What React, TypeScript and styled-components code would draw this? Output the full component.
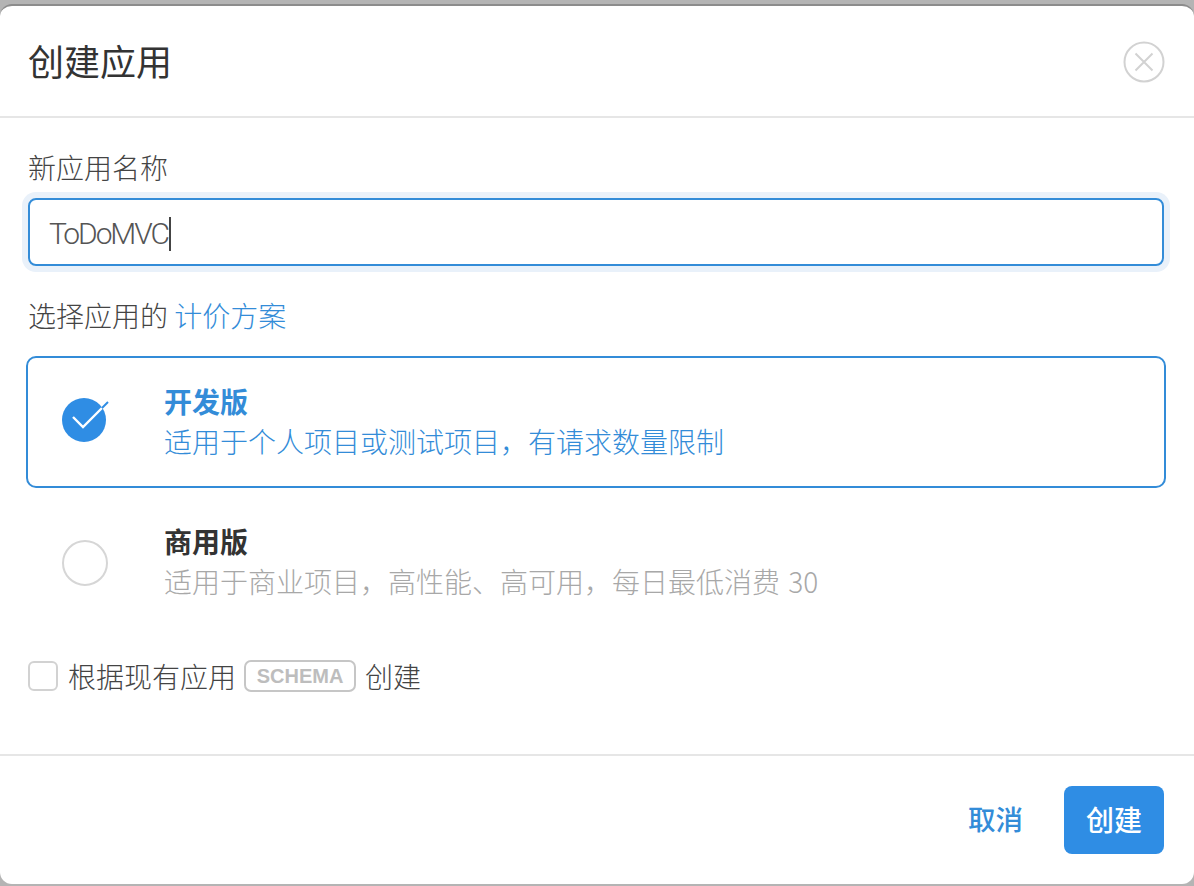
import React from "react";
import styled, { createGlobalStyle } from "styled-components";

const GlobalStyle = createGlobalStyle`
	html, body {
		margin: 0;
		padding: 0;
		background: #b4b4b4;
	}

	body {
		font-family: "Noto Sans CJK SC", "Liberation Sans", sans-serif;
		color: #333;
	}
`;

interface IPlan {
	name: string;
	desc: string;
	active?: boolean;
}

const plans: IPlan[] = [
	{
		name: "开发版",
		desc: "适用于个人项目或测试项目，有请求数量限制",
		active: true,
	},
	{
		name: "商用版",
		desc: "适用于商业项目，高性能、高可用，每日最低消费 30",
	},
];

const CheckedIcon = () => (
	<svg width="50" height="50" viewBox="0 0 50 50">
		<circle cx="22" cy="24" r="22" fill="#2f8de4" />
		<path d="M11 21 L21 31 L40 12" fill="none" stroke="#fff" strokeWidth="2.400" />
		<path d="M40 12 L46 6" fill="none" stroke="#2f8de4" strokeWidth="2" />
	</svg>
);

const CloseIcon = () => (
	<svg width="42" height="42" viewBox="0 0 42 42">
		<circle cx="21" cy="21" r="19.500" fill="none" stroke="#d2d2d2" strokeWidth="2" />
		<path
			d="M12.500 12.500 L29.500 29.500 M29.500 12.500 L12.500 29.500"
			fill="none"
			stroke="#d2d2d2"
			strokeWidth="2"
		/>
	</svg>
);

const App = () => {
	return (
		<>
			<GlobalStyle />
			<Page>
				<Modal>
					<Header>
						<Title>创建应用</Title>
						<CloseButton>
							<CloseIcon />
						</CloseButton>
					</Header>

					<Body>
						<Label>新应用名称</Label>
						<InputBox>
							ToDoMVC
							<Caret />
						</InputBox>

						<PlanLabel>
							选择应用的 <PlanLink>计价方案</PlanLink>
						</PlanLabel>

						{plans.map((plan) => (
							<PlanCard key={plan.name} $active={plan.active}>
								<PlanMark>{plan.active ? <CheckedIcon /> : <EmptyMark />}</PlanMark>
								<PlanText>
									<PlanName $active={plan.active}>{plan.name}</PlanName>
									<PlanDesc $active={plan.active}>{plan.desc}</PlanDesc>
								</PlanText>
							</PlanCard>
						))}

						<SchemaRow>
							<CheckBox />
							<span>根据现有应用</span>
							<Badge>SCHEMA</Badge>
							<span>创建</span>
						</SchemaRow>
					</Body>

					<Footer>
						<CancelButton>取消</CancelButton>
						<CreateButton>创建</CreateButton>
					</Footer>
				</Modal>
			</Page>
		</>
	);
};

const Page = styled.div`
	box-sizing: border-box;
	width: 1194px;
	height: 886px;
	padding: 4px 0 2px;
	overflow: hidden;
	background: #b4b4b4;
`;

const Modal = styled.div`
	display: flex;
	flex-direction: column;
	box-sizing: border-box;
	height: 880px;
	border-top: 2px solid #8c8c8c;
	border-radius: 12px;
	background: #fff;
`;

const Header = styled.div`
	display: flex;
	align-items: center;
	justify-content: space-between;
	box-sizing: border-box;
	height: 112px;
	padding: 0 29px 0 28px;
	border-bottom: 2px solid #e6e6e6;
`;

const Title = styled.h1`
	margin: 0 0 2px;
	font-size: 36px;
	font-weight: 400;
	line-height: 48px;
	color: #333;
`;

const CloseButton = styled.div`
	display: flex;
	width: 42px;
	height: 42px;
	margin-top: 2px;
`;

const Body = styled.div`
	flex: 1;
	display: flex;
	flex-direction: column;
	padding: 0 30px 0 28px;
`;

const Label = styled.div`
	margin-top: 29px;
	font-size: 28px;
	font-weight: 300;
	line-height: 40px;
	color: #444;
`;

const InputBox = styled.div`
	display: flex;
	align-items: center;
	box-sizing: border-box;
	height: 68px;
	margin-top: 11px;
	padding: 3px 19px 0;
	border: 2px solid #338cd8;
	border-radius: 8px;
	box-shadow: 0 0 0 6px #e9f1fa;
	font-family: "Roboto", "Liberation Sans", sans-serif;
	font-size: 30px;
	font-weight: 300;
	letter-spacing: -2.100px;
	color: #555;
`;

const Caret = styled.i`
	display: block;
	width: 2px;
	height: 34px;
	margin-left: 1px;
	background: #444;
`;

const PlanLabel = styled.div`
	margin-top: 29px;
	font-size: 28px;
	font-weight: 300;
	line-height: 40px;
	color: #444;
`;

const PlanLink = styled.span`
	color: #338cd8;
`;

const PlanCard = styled.div<{ $active?: boolean }>`
	display: flex;
	align-items: center;
	box-sizing: border-box;
	height: ${({ $active }) => ($active ? "132px" : "146px")};
	margin: ${({ $active }) => ($active ? "21px" : "0")} -2px 0;
	padding-bottom: ${({ $active }) => ($active ? "2px" : "0")};
	border: 2px solid ${({ $active }) => ($active ? "#338cd8" : "transparent")};
	border-radius: 10px;
`;

const PlanMark = styled.div`
	display: flex;
	align-items: center;
	box-sizing: border-box;
	width: 136px;
	padding-left: 34px;
`;

const EmptyMark = styled.span`
	display: block;
	box-sizing: border-box;
	width: 46px;
	height: 46px;
	margin-top: 4px;
	border: 2px solid #d6d6d6;
	border-radius: 50%;
`;

const PlanText = styled.div`
	display: flex;
	flex-direction: column;
`;

const PlanName = styled.div<{ $active?: boolean }>`
	font-size: 28px;
	font-weight: 700;
	line-height: 40px;
	color: ${({ $active }) => ($active ? "#338cd8" : "#333")};
`;

const PlanDesc = styled.div<{ $active?: boolean }>`
	font-size: 28px;
	font-weight: 300;
	line-height: 40px;
	word-spacing: 2px;
	color: ${({ $active }) => ($active ? "#338cd8" : "#a8a8a8")};
`;

const SchemaRow = styled.div`
	display: flex;
	align-items: center;
	height: 32px;
	margin-top: 26px;
	font-size: 28px;
	font-weight: 300;
	color: #444;

	span:last-child {
		margin-left: 9px;
	}
`;

const CheckBox = styled.span`
	display: block;
	box-sizing: border-box;
	width: 30px;
	height: 30px;
	margin-right: 10px;
	border: 2px solid #d2d2d2;
	border-radius: 6px;
`;

const Badge = styled.span`
	display: flex;
	align-items: center;
	justify-content: center;
	box-sizing: border-box;
	width: 112px;
	height: 32px;
	margin-left: 8px;
	border: 2px solid #c6c6c6;
	border-radius: 7px;
	font-family: "Liberation Sans", sans-serif;
	font-size: 20px;
	font-weight: 700;
	color: #bdbdbd;
`;

const Footer = styled.div`
	display: flex;
	align-items: center;
	justify-content: flex-end;
	gap: 41px;
	box-sizing: border-box;
	height: 130px;
	padding: 0 30px 0 0;
	border-top: 2px solid #e6e6e6;
`;

const CancelButton = styled.span`
	margin-bottom: 4px;
	font-size: 27.500px;
	font-weight: 500;
	color: #338cd8;
`;

const CreateButton = styled.span`
	display: flex;
	align-items: center;
	justify-content: center;
	box-sizing: border-box;
	width: 100px;
	height: 68px;
	padding-bottom: 2px;
	border-radius: 8px;
	background: #2f8de4;
	font-size: 28px;
	font-weight: 500;
	color: #fff;
`;

export default App;
